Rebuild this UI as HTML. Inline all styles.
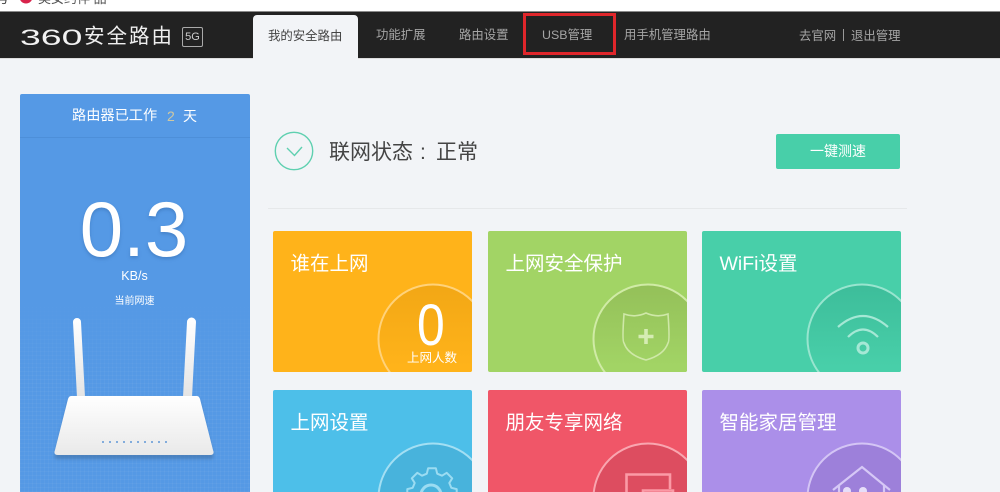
<!DOCTYPE html>
<html lang="zh">
<head>
<meta charset="utf-8">
<title>360安全路由</title>
<style>
html,body{margin:0;padding:0;overflow:hidden;width:1000px;height:492px}
body{background:#f2f4f7;position:relative;font-family:"Liberation Sans","Noto Sans CJK SC",sans-serif}
div,span{position:absolute;white-space:nowrap}
.top{left:0;top:0;width:1000px;height:11px;background:#fff;overflow:hidden}
.nav{left:0;top:11px;width:1000px;height:48px;background:#222;border-top:1px solid #8a8a8a;box-sizing:border-box;border-bottom:1px solid #ddd}
.n{top:27px;font-size:12.4px;line-height:16px;color:#a5a5a5}
.tab{left:253px;top:15px;width:105px;height:44px;background:#f2f4f7;border-radius:4px 4px 0 0}
.red{left:523px;top:13px;width:93px;height:42px;box-sizing:border-box;border:3px solid #e0262b}
.panel{left:20px;top:94px;width:230px;height:398px;background:#5599e5;border-radius:2px 2px 0 0;overflow:hidden}
.grid{left:0;top:200px;width:230px;height:198px;background-image:repeating-linear-gradient(0deg,rgba(255,255,255,.035) 0 1px,transparent 1px 4px),repeating-linear-gradient(90deg,rgba(255,255,255,.035) 0 1px,transparent 1px 4px);-webkit-mask-image:linear-gradient(180deg,transparent 0,#000 45%);mask-image:linear-gradient(180deg,transparent 0,#000 45%)}
.card{width:199px;overflow:hidden;border-radius:2px}
.card svg{position:absolute;left:0;top:0}
.t{left:17.5px;top:19px;font-size:19.5px;line-height:28px;color:#fff}
.h{top:138px;font-size:21px;line-height:30px;color:#444}
</style>
</head>
<body>
<div class="top">
  <span style="left:-4px;top:-9px;font-size:13px;line-height:16px;color:#444">号</span>
  <svg style="position:absolute;left:18px;top:-6px" width="16" height="12"><circle cx="8" cy="3" r="6.5" fill="#d8234b"/><circle cx="6" cy="2" r="2.5" fill="#fff"/></svg>
  <span style="left:38px;top:-9px;font-size:13px;line-height:16px;color:#555">美女约伴 品</span>
</div>
<div class="nav"></div>
<span style="left:20px;top:25px;font-size:22px;line-height:26px;color:#f2f2f2;font-weight:400;transform-origin:0 50%;transform:scaleX(1.7)">360</span>
<span style="left:84px;top:24px;font-size:20.5px;line-height:26px;color:#efefef;letter-spacing:2px">安全路由</span>
<div style="left:182px;top:27px;width:21px;height:20px;box-sizing:border-box;border:1px solid #aaa;border-radius:2px;color:#ccc;font-size:11px;line-height:18px;text-align:center">5G</div>
<div class="tab"></div>
<span class="n" style="left:268px;top:28px;color:#444">我的安全路由</span>
<span class="n" style="left:376px">功能扩展</span>
<span class="n" style="left:459px">路由设置</span>
<span class="n" style="left:542px">USB管理</span>
<span class="n" style="left:624px">用手机管理路由</span>
<span class="n" style="left:799px;top:28px">去官网</span>
<div style="left:843px;top:29px;width:1px;height:12px;background:#999"></div>
<span class="n" style="left:851px;top:28px">退出管理</span>
<div class="red"></div>

<div class="panel">
  <div class="grid"></div>
  <div style="left:0;top:43px;width:230px;height:1px;background:#4d8fd9"></div>
  <span style="left:52px;top:13px;font-size:14.2px;line-height:18px;color:#fff">路由器已工作</span>
  <span style="left:147px;top:13px;font-size:14px;line-height:18px;color:#d0c8a0">2</span>
  <span style="left:163px;top:13px;font-size:14px;line-height:18px;color:#fff">天</span>
  <div style="left:0;top:91px;width:228px;text-align:center;font-size:78px;line-height:88px;color:#fff;text-shadow:0 2px 3px rgba(40,90,150,.35)">0.3</div>
  <div style="left:0;top:174px;width:229px;text-align:center;font-size:12.5px;line-height:16px;color:#fff">KB/s</div>
  <div style="left:0;top:201px;width:229px;text-align:center;font-size:10px;line-height:14px;color:#fff">当前网速</div>
</div>

<svg style="position:absolute;left:0;top:300px" width="260" height="192">
  <defs>
    <linearGradient id="ant" x1="0" y1="0" x2="0" y2="1"><stop offset="0" stop-color="#fff"/><stop offset="1" stop-color="#e4e4e4"/></linearGradient>
    <linearGradient id="bd" x1="0" y1="0" x2="0" y2="1"><stop offset="0" stop-color="#fff"/><stop offset="1" stop-color="#e9e9e9"/></linearGradient>
    <filter id="bl" x="-10%" y="-10%" width="120%" height="130%"><feGaussianBlur stdDeviation="1.5"/></filter>
  </defs>
  <path d="M73 22a4 4 0 0 1 8 0L85 97H77Z" fill="url(#ant)"/>
  <path d="M187 22a4 4 0 0 1 9 0L192 97H183Z" fill="url(#ant)"/>
  <path d="M71 96H197Q199 96 200 99L213 151Q215 156 210 156H58Q53 156 55 151L68 99Q69 96 71 96Z" fill="#3f6d9f" transform="translate(0 3)" opacity=".55" filter="url(#bl)"/>
  <path d="M71 96H197Q199 96 200 99L213 150Q215 155 210 155H58Q53 155 55 150L68 99Q69 96 71 96Z" fill="url(#bd)"/>
  <g fill="#5f97d6">
    <circle cx="103" cy="142" r="1"/><circle cx="110" cy="142" r="1"/><circle cx="117" cy="142" r="1"/><circle cx="124" cy="142" r="1"/><circle cx="131" cy="142" r="1"/><circle cx="138" cy="142" r="1"/><circle cx="145" cy="142" r="1"/><circle cx="152" cy="142" r="1"/><circle cx="159" cy="142" r="1"/><circle cx="166" cy="142" r="1"/>
  </g>
</svg>

<svg style="position:absolute;left:274px;top:131px" width="40" height="40">
  <circle cx="20" cy="20" r="18.7" fill="none" stroke="#5fd0b0" stroke-width="1.4"/>
  <path d="M13 17L20.5 24.5L28 16" fill="none" stroke="#5fd0b0" stroke-width="1.4"/>
</svg>
<span class="h" style="left:329px">联网状态</span>
<span class="h" style="left:420px">:</span>
<span class="h" style="left:436px">正常</span>
<div style="left:776px;top:134px;width:124px;height:35px;background:#48cfa9;border-radius:2px;color:#fff;font-size:14px;line-height:35px;text-align:center">一键测速</div>
<div style="left:268px;top:208px;width:639px;height:1px;background:#e6e8ea"></div>

<svg width="0" height="0" style="position:absolute">
  <defs>
    <linearGradient id="g1" x1="0" y1="0" x2="0" y2="1"><stop offset="0" stop-color="#f2a715"/><stop offset=".75" stop-color="#ffb31a"/></linearGradient>
    <linearGradient id="g2" x1="0" y1="0" x2="0" y2="1"><stop offset="0" stop-color="#94c059"/><stop offset=".75" stop-color="#a2d465"/></linearGradient>
    <linearGradient id="g3" x1="0" y1="0" x2="0" y2="1"><stop offset="0" stop-color="#3dbd9a"/><stop offset=".75" stop-color="#48cfa9"/></linearGradient>
  </defs>
</svg>

<div class="card" style="left:273px;top:231px;height:141px;background:#ffb31a">
  <svg width="199" height="141"><circle cx="160" cy="108" r="54.5" fill="url(#g1)" stroke="#ffd27a" stroke-width="2"/></svg>
  <span class="t">谁在上网</span>
  <span style="left:144px;top:58px;font-size:58px;line-height:74px;color:#fff;transform-origin:0 50%;transform:scaleX(.86)">0</span>
  <span style="left:134px;top:119px;font-size:12.5px;line-height:16px;color:#fff">上网人数</span>
</div>
<div class="card" style="left:488px;top:231px;height:141px;background:#a2d465">
  <svg width="199" height="141">
    <circle cx="160" cy="108" r="54.5" fill="url(#g2)" stroke="#d0eba6" stroke-width="2"/>
    <path d="M136 83Q147 87 158 82Q169 87 180 83Q182 110 180 112Q176 124 158 129Q140 124 136 112Q134 110 136 83Z" fill="none" stroke="#cfe8a8" stroke-width="1.6"/>
    <path d="M158 98V113M150.500 105.500H165.500" stroke="#d5ecb3" stroke-width="3.6" fill="none"/>
  </svg>
  <span class="t">上网安全保护</span>
</div>
<div class="card" style="left:702px;top:231px;height:141px;background:#48cfa9">
  <svg width="199" height="141">
    <circle cx="160" cy="108" r="54.5" fill="url(#g3)" stroke="#98e5cf" stroke-width="2"/>
    <path d="M136 96Q161 74 186 96" fill="none" stroke="#a5e8d5" stroke-width="2.2"/>
    <path d="M146 106Q161 91 176 106" fill="none" stroke="#a5e8d5" stroke-width="2.2"/>
    <circle cx="161" cy="117" r="5" fill="none" stroke="#a5e8d5" stroke-width="3"/>
  </svg>
  <span class="t">WiFi设置</span>
</div>

<div class="card" style="left:273px;top:390px;height:102px;background:#4dbfe9;border-radius:2px 2px 0 0">
  <svg width="199" height="102">
    <circle cx="160" cy="108" r="54.5" fill="#48b3dc" stroke="#a3dff3" stroke-width="2"/>
    <path d="M139.700 108.200L134.300 106.900V99.100L139.700 97.800L141.700 93L138.800 88.300L144.300 82.800L149 85.700L153.800 83.700L155.100 78.300H162.900L164.200 83.700L169 85.700L173.700 82.800L179.200 88.300L176.300 93L178.300 97.800L183.700 99.100V106.900L178.300 108.200" fill="none" stroke="#9bdcf2" stroke-width="2" stroke-linejoin="round"/>
    <circle cx="158" cy="105" r="10" fill="none" stroke="#9bdcf2" stroke-width="3"/>
  </svg>
  <span class="t">上网设置</span>
</div>
<div class="card" style="left:488px;top:390px;height:102px;background:#f05668;border-radius:2px 2px 0 0">
  <svg width="199" height="102">
    <circle cx="160" cy="108" r="54.5" fill="#dd4d60" stroke="#f9a6b0" stroke-width="2"/>
    <path d="M138.500 103V84.500H182V99" fill="none" stroke="#fb9aa6" stroke-width="2.6"/>
    <path d="M155 103V100.500H185V103" fill="none" stroke="#fb9aa6" stroke-width="2.6"/>
  </svg>
  <span class="t">朋友专享网络</span>
</div>
<div class="card" style="left:702px;top:390px;height:102px;background:#ab8fe9;border-radius:2px 2px 0 0">
  <svg width="199" height="102">
    <circle cx="160" cy="108" r="54.5" fill="#9d80da" stroke="#d4c5f5" stroke-width="2"/>
    <path d="M131 100L160 77L188 100M137 95V103M182 95V103" fill="none" stroke="#d6c8f6" stroke-width="2.2"/>
    <circle cx="145" cy="101" r="4" fill="#e6def9"/><circle cx="161" cy="101" r="4" fill="#e6def9"/>
  </svg>
  <span class="t">智能家居管理</span>
</div>
</body>
</html>
